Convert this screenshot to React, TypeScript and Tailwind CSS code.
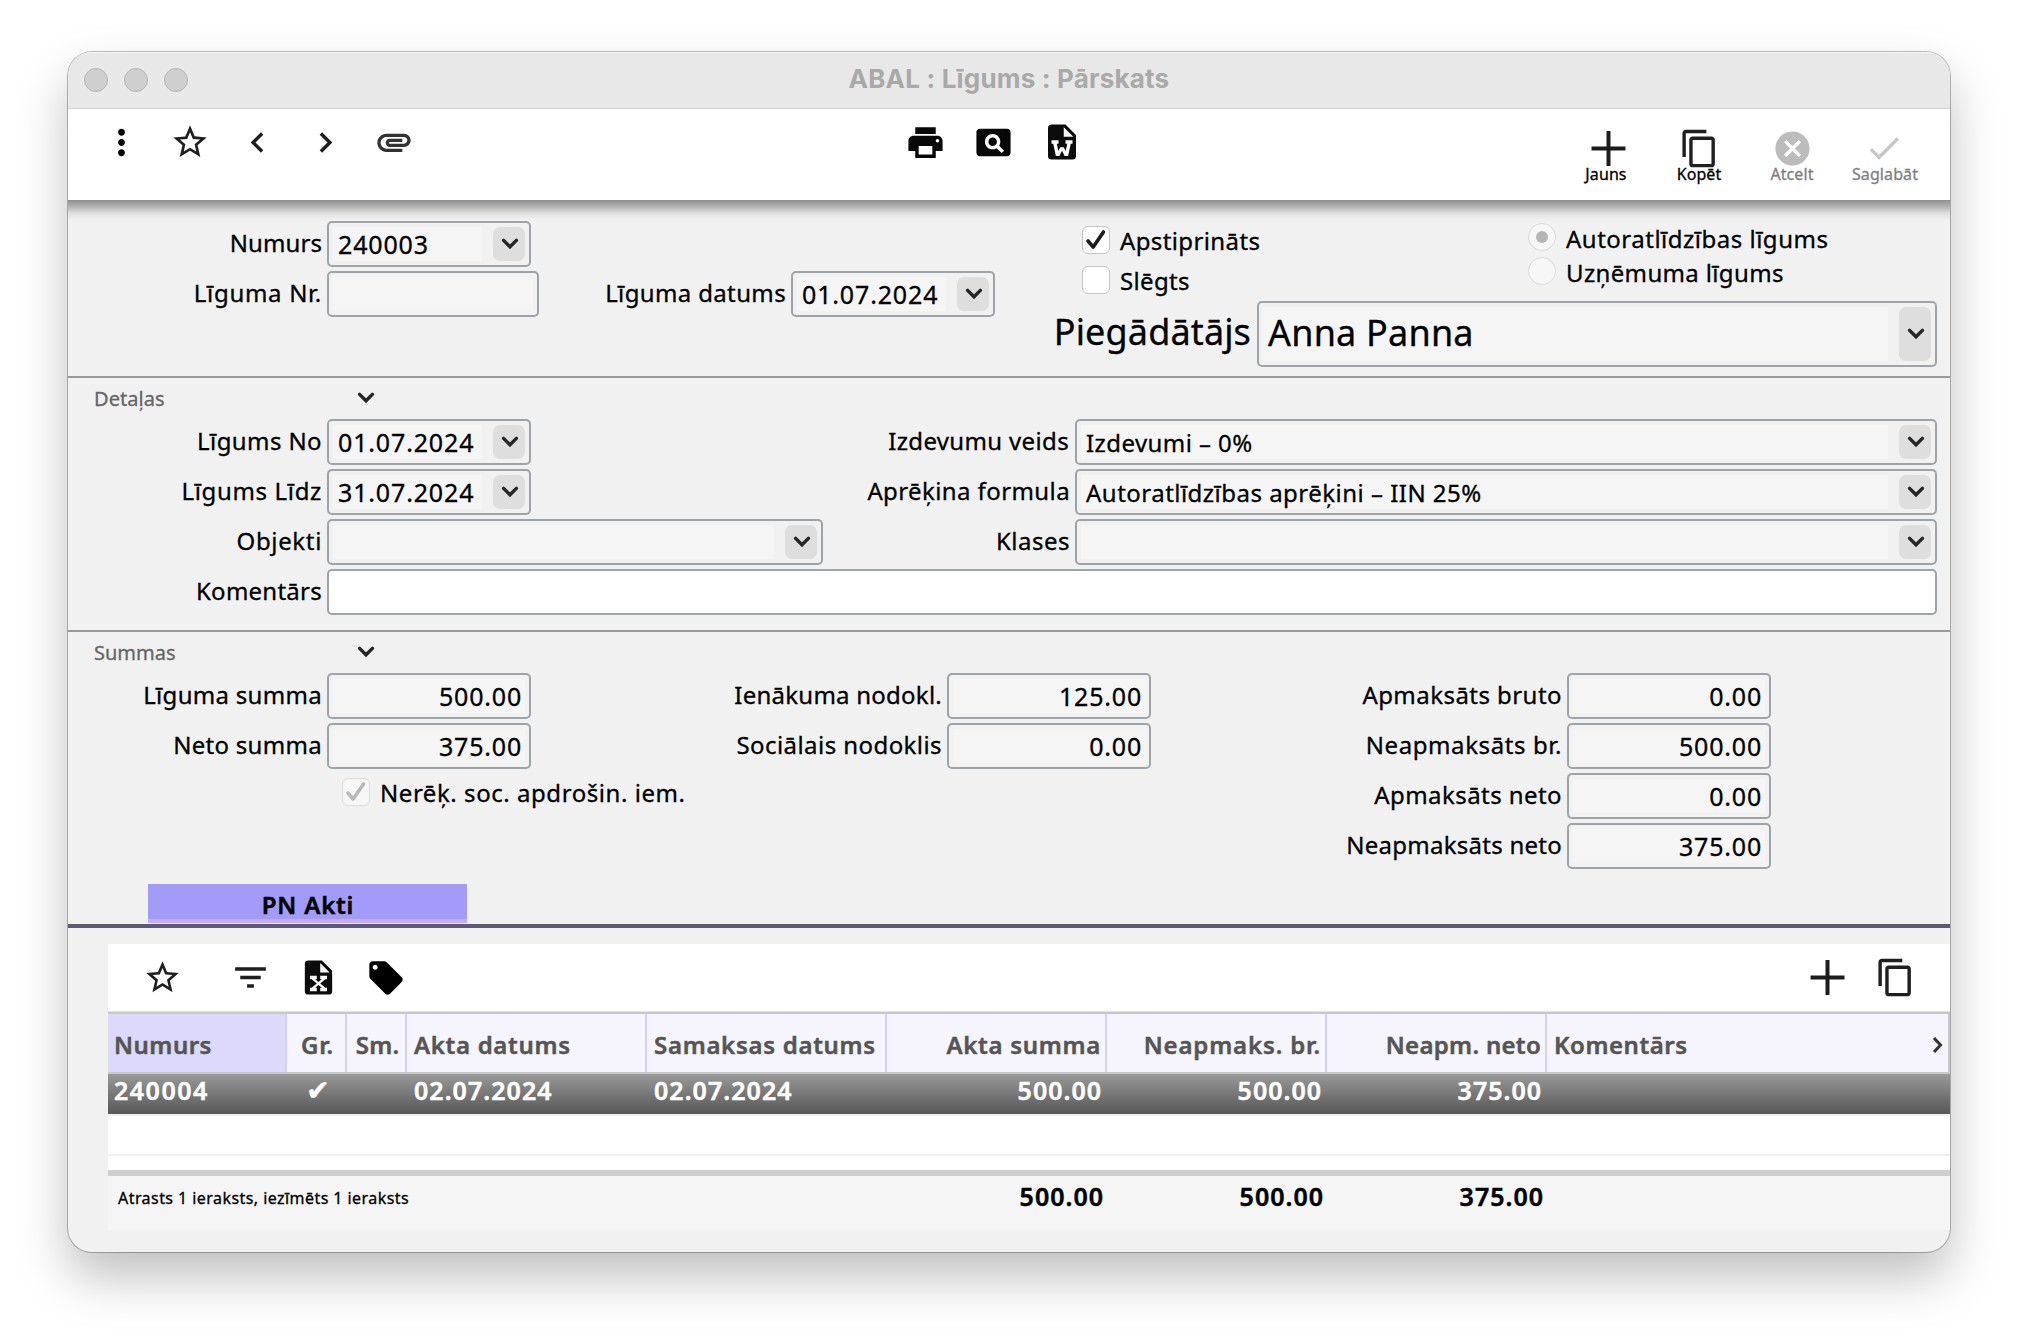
import type { ReactNode } from "react";
import {
  MdAttachment,
  MdCancel,
  MdCheck,
  MdChevronLeft,
  MdChevronRight,
  MdContentCopy,
  MdFilterList,
  MdLocalOffer,
  MdMoreVert,
  MdPageview,
  MdPrint,
  MdStarBorder,
} from "react-icons/md";

function Chevron() {
  return (
    <svg width="18" height="12" viewBox="0 0 18 12" fill="none" className="block shrink-0">
      <path d="M2.6 2.4 9 8.8l6.4-6.4" stroke="#262626" strokeWidth="3.4" strokeLinecap="round" />
    </svg>
  );
}

function Plus() {
  return (
    <svg width="41" height="41" viewBox="0 0 41 41" className="block">
      <path d="M20.5 3v35M3.5 20.5h34" stroke="#1c1c1c" strokeWidth="4" />
    </svg>
  );
}

function FileWord() {
  return (
    <svg width="42" height="42" viewBox="0 0 24 24" fill="#0c0c0c" className="block">
      <path d="M6,2H14L20,8V20A2,2 0 0,1 18,22H6A2,2 0 0,1 4,20V4A2,2 0 0,1 6,2M13,3.5V9H18.5L13,3.5M7,13L8.5,20H10.5L12,17L13.5,20H15.5L17,13H18V11H14V13H15L14.1,17.2L13,15V15H11V15L9.9,17.2L9,13H10V11H6V13H7Z" />
    </svg>
  );
}

function FileExcel() {
  return (
    <svg width="41" height="41" viewBox="0 0 24 24" fill="#0c0c0c" className="block">
      <path d="M6,2H14L20,8V20A2,2 0 0,1 18,22H6A2,2 0 0,1 4,20V4A2,2 0 0,1 6,2M13,3.5V9H18.5L13,3.5M17,11H13V13H14L12,14.67L10,13H11V11H7V13H8L11,15.5L8,18H7V20H11V18H10L12,16.33L14,18H13V20H17V18H16L13,15.5L16,13H17V11Z" />
    </svg>
  );
}

function Label({ w, children, className = "tracking-[0.36px]" }: { w: string; children: ReactNode; className?: string }) {
  return <div className={`${w} shrink-0 pb-[3px] text-right text-[24px] whitespace-nowrap ${className}`}>{children}</div>;
}

function Select({
  w,
  h = "h-[46px]",
  text = "pt-px text-[25px] tracking-[0.85px]",
  children,
}: {
  w: string;
  h?: string;
  text?: string;
  children?: ReactNode;
}) {
  return (
    <div className={`${w} ${h} flex shrink-0 rounded-[5px] border-2 border-[#9ca4a9] bg-[#f1f1f1] py-1 pr-1 pl-1`}>
      <div className={`mr-[11px] flex flex-1 items-center bg-[#f5f5f5] pl-[5px] whitespace-nowrap ${text}`}>{children}</div>
      <div className="flex w-[32px] items-center justify-center rounded-[7px] bg-[#dedede] pl-[2px]">
        <Chevron />
      </div>
    </div>
  );
}

function Field({ w, children, bg = "bg-[#f5f5f5]", outer = "bg-[#f2f2f2]" }: { w: string; children?: ReactNode; bg?: string; outer?: string }) {
  return (
    <div className={`${w} h-[46px] shrink-0 rounded-[5px] border-2 border-[#9ca4a9] p-1 ${outer}`}>
      <div className={`flex h-full items-center justify-end pt-px pr-[3px] text-[25px] tracking-[0.8px] ${bg}`}>{children}</div>
    </div>
  );
}

function CheckBox({ checked, disabled }: { checked?: boolean; disabled?: boolean }) {
  return (
    <div
      className={`flex size-[28px] shrink-0 items-center justify-center rounded-[6px] border ${
        disabled ? "border-[#dcdcdc] bg-[#f7f7f7]" : "border-[#c4c4c4] bg-white"
      }`}
    >
      {checked && (
        <svg width="22" height="22" viewBox="0 0 22 22" fill="none">
          <path
            d="M3 12 8.2 18 18.5 3"
            stroke={disabled ? "#b9b9b9" : "#1c1c1c"}
            strokeWidth="3.6"
            strokeLinecap="round"
            strokeLinejoin="round"
          />
        </svg>
      )}
    </div>
  );
}

function Radio({ on }: { on?: boolean }) {
  return (
    <div className="flex size-[28px] shrink-0 items-center justify-center rounded-full border border-[#dadada] bg-[#f7f7f7]">
      {on && <div className="size-3 rounded-full bg-[#b5b5b5]" />}
    </div>
  );
}

function SectionHead({ children, className }: { children: ReactNode; className: string }) {
  return (
    <div className="flex h-[41px] items-center">
      <div className={`w-[289px] shrink-0 pl-[26px] text-[20px] text-[#666] ${className}`}>{children}</div>
      <div className="pb-[2px]">
        <Chevron />
      </div>
    </div>
  );
}

function Slot({ children }: { children: ReactNode }) {
  return <div className="flex h-[42px] w-[68px] items-center justify-center pr-px">{children}</div>;
}

function Action({ icon, children, muted }: { icon: ReactNode; children: ReactNode; muted?: boolean }) {
  return (
    <div className="flex w-[93px] flex-col items-center">
      {icon}
      <div className={`-mt-[5px] pr-px text-[16px] leading-[20px] tracking-[0.1px] ${muted ? "text-[#808080]" : "text-black"}`}>{children}</div>
    </div>
  );
}

const columns = [
  { title: "Numurs", w: "w-[179px]", head: "pl-[6px] bg-[#dcd9fb] tracking-[0.5px]", cell: "pl-[6px] tracking-[1.5px]", value: "240004" },
  { title: "Gr.", w: "w-[60px]", head: "justify-center pl-[3px] tracking-[0.8px]", cell: "justify-center pl-[2px]", value: "✔" },
  { title: "Sm.", w: "w-[60px]", head: "justify-center pl-[3px] tracking-[0.2px]", cell: "", value: "" },
  { title: "Akta datums", w: "w-[240px]", head: "pl-[7px] tracking-[0.68px]", cell: "pl-[7px] tracking-[1.04px]", value: "02.07.2024" },
  { title: "Samaksas datums", w: "w-[240px]", head: "pl-[7px] tracking-[0.7px]", cell: "pl-[7px] tracking-[1.04px]", value: "02.07.2024" },
  { title: "Akta summa", w: "w-[220px]", head: "justify-end pr-[4px] tracking-[0.7px]", cell: "justify-end pr-[5px] tracking-[1px]", value: "500.00", total: "500.00" },
  { title: "Neapmaks. br.", w: "w-[220px]", head: "justify-end pr-[4px] tracking-[0.85px]", cell: "justify-end pr-[5px] tracking-[1px]", value: "500.00", total: "500.00" },
  { title: "Neapm. neto", w: "w-[220px]", head: "justify-end pr-[4px] tracking-[0.3px]", cell: "justify-end pr-[5px] tracking-[1px]", value: "375.00", total: "375.00" },
];

export default function App() {
  return (
    <div className="h-[1336px] w-[2018px] overflow-hidden bg-white pt-[52px] pl-[68px] font-['Noto_Sans',sans-serif] text-black [-webkit-text-stroke:0.3px]">
      <div className="flex h-[1200px] w-[1882px] flex-col overflow-hidden rounded-[24px] bg-[#f1f1f1] shadow-[0_0_0_1px_rgba(0,0,0,0.26),0_25px_50px_rgba(0,0,0,0.25)]">
        {/* Title bar */}
        <div className="flex h-[57px] shrink-0 items-center border-b border-[#d2d2d2] bg-[#e8e8e8] pl-4 shadow-[inset_0_1px_0_#f6f6f6]">
          <div className="flex w-[200px] gap-4">
            {[0, 1, 2].map((i) => (
              <div key={i} className="size-6 rounded-full border border-[#b4b4b4] bg-[#cfcfcf]" />
            ))}
          </div>
          <div className="mr-[216px] flex-1 pb-[3px] text-center font-['Inter',sans-serif] text-[26px] font-bold tracking-[0.19px] text-[#a9a9a9] [-webkit-text-stroke:0px]">
            ABAL : Līgums : Pārskats
          </div>
        </div>

        {/* Toolbar */}
        <div className="flex h-[91px] shrink-0 items-start bg-white pt-[12px] pr-[18px] pl-[20px] text-[#1f1f1f]">
          <Slot><MdMoreVert size={41} color="#000" /></Slot>
          <Slot><MdStarBorder size={40} /></Slot>
          <Slot><MdChevronLeft size={41} /></Slot>
          <Slot><MdChevronRight size={41} /></Slot>
          <Slot><MdAttachment size={40} color="#333" /></Slot>
          <div className="w-[464px]" />
          <Slot><MdPrint size={41} color="#080808" /></Slot>
          <Slot><MdPageview size={41} color="#080808" /></Slot>
          <Slot><FileWord /></Slot>
          <div className="ml-auto flex pt-[7px]">
            <Action icon={<div className="pl-[3px]"><Plus /></div>}>Jauns</Action>
            <Action icon={<MdContentCopy size={41} />}>Kopēt</Action>
            <Action icon={<MdCancel size={41} color="#bcbcbc" />} muted>Atcelt</Action>
            <Action icon={<MdCheck size={40} color="#c6c6c6" className="mr-[3px] mb-px" />} muted>Saglabāt</Action>
          </div>
        </div>

        {/* Contract header */}
        <div className="flex h-[178px] shrink-0 border-b-2 border-[#999] bg-[linear-gradient(to_bottom,#8f8f8f_0px,#b4b4b4_7px,#dedede_13px,#f1f1f1_20px)] pt-[21px]">
          <div className="flex w-[927px] shrink-0 flex-col gap-1">
            <div className="flex items-center gap-[5px]">
              <Label w="w-[254px]" className="tracking-[0.1px]">Numurs</Label>
              <Select w="w-[204px]">240003</Select>
            </div>
            <div className="flex items-center gap-[5px]">
              <Label w="w-[254px]" className="tracking-[0.7px]">Līguma Nr.</Label>
              <Field w="w-[212px]" />
              <Label w="w-[242px]">Līguma datums</Label>
              <Select w="w-[204px]">01.07.2024</Select>
            </div>
          </div>
          <div className="flex flex-1 flex-col pr-[13px]">
            <div className="flex h-[80px] pl-[87px] text-[24px]">
              <div className="flex w-[446px] flex-col gap-3 pt-[5px]">
                <div className="flex h-7 items-center gap-[10px] tracking-[0.38px]"><CheckBox checked /><span className="pt-px">Apstiprināts</span></div>
                <div className="flex h-7 items-center gap-[10px] tracking-[0.33px]"><CheckBox /><span className="pt-px">Slēgts</span></div>
              </div>
              <div className="flex flex-col gap-[6px] pt-[2px]">
                <div className="flex h-7 items-center gap-[10px] tracking-[0.5px]"><Radio on /><span className="pt-1">Autoratlīdzības līgums</span></div>
                <div className="flex h-7 items-center gap-[10px] tracking-[0.35px]"><Radio /><span className="pt-1">Uzņēmuma līgums</span></div>
              </div>
            </div>
            <div className="flex items-center justify-end gap-[6px]">
              <div className="pb-[5px] text-[36px] leading-[50px] tracking-[0.13px]">Piegādātājs</div>
              <Select w="w-[680px]" h="h-[66px]" text="pb-[3px] text-[36px] tracking-[0.2px]">Anna Panna</Select>
            </div>
          </div>
        </div>

        {/* Details */}
        <div className="h-[254px] shrink-0 border-b-2 border-[#999] pr-[13px]">
          <SectionHead className="tracking-[0.05px]">Detaļas</SectionHead>
          <div className="flex flex-col gap-1">
            <div className="flex items-center gap-[5px]">
              <Label w="w-[254px]" className="tracking-[0.4px]">Līgums No</Label>
              <Select w="w-[204px]">01.07.2024</Select>
              <Label w="w-[533px]" className="mr-px tracking-[0.35px]">Izdevumu veids</Label>
              <Select w="w-[862px]" text="pt-px text-[24px] tracking-[0.43px]">Izdevumi – 0%</Select>
            </div>
            <div className="flex items-center gap-[5px]">
              <Label w="w-[254px]" className="tracking-[0.65px]">Līgums Līdz</Label>
              <Select w="w-[204px]">31.07.2024</Select>
              <Label w="w-[534px]" className="tracking-[0.4px]">Aprēķina formula</Label>
              <Select w="w-[862px]" text="pt-px text-[24px] tracking-[0.48px]">Autoratlīdzības aprēķini – IIN 25%</Select>
            </div>
            <div className="flex items-center gap-[5px]">
              <Label w="w-[254px]" className="tracking-[0.65px]">Objekti</Label>
              <Select w="w-[496px]" />
              <Label w="w-[242px]" className="tracking-[0.5px]">Klases</Label>
              <Select w="w-[862px]" />
            </div>
            <div className="flex items-center gap-[5px]">
              <Label w="w-[254px]" className="tracking-[0.25px]">Komentārs</Label>
              <Field w="w-[1610px]" bg="bg-white" outer="bg-white" />
            </div>
          </div>
        </div>

        {/* Sums */}
        <div className="h-[252px] shrink-0">
          <SectionHead className="tracking-[0px]">Summas</SectionHead>
          <div className="flex">
            <div className="flex w-[463px] flex-col gap-1">
              <div className="flex items-center gap-[5px]">
                <Label w="w-[254px]" className="tracking-[0.3px]">Līguma summa</Label>
                <Field w="w-[204px]">500.00</Field>
              </div>
              <div className="flex items-center gap-[5px]">
                <Label w="w-[254px]" className="tracking-[0.3px]">Neto summa</Label>
                <Field w="w-[204px]">375.00</Field>
              </div>
              <div className="flex h-[38px] items-center gap-[10px] pl-[274px] text-[24px] tracking-[0.55px] whitespace-nowrap">
                <CheckBox checked disabled />
                <span className="pt-[2px]">Nerēķ. soc. apdrošin. iem.</span>
              </div>
            </div>
            <div className="flex w-[620px] flex-col gap-1">
              <div className="flex items-center gap-[5px]">
                <Label w="w-[411px]" className="tracking-[0.24px]">Ienākuma nodokl.</Label>
                <Field w="w-[204px]">125.00</Field>
              </div>
              <div className="flex items-center gap-[5px]">
                <Label w="w-[411px]" className="tracking-[0.43px]">Sociālais nodoklis</Label>
                <Field w="w-[204px]">0.00</Field>
              </div>
            </div>
            <div className="flex flex-col gap-1">
              <div className="flex items-center gap-[5px]">
                <Label w="w-[411px]" className="tracking-[0.45px]">Apmaksāts bruto</Label>
                <Field w="w-[204px]">0.00</Field>
              </div>
              <div className="flex items-center gap-[5px]">
                <Label w="w-[411px]" className="tracking-[0.6px]">Neapmaksāts br.</Label>
                <Field w="w-[204px]">500.00</Field>
              </div>
              <div className="flex items-center gap-[5px]">
                <Label w="w-[411px]" className="tracking-[0.43px]">Apmaksāts neto</Label>
                <Field w="w-[204px]">0.00</Field>
              </div>
              <div className="flex items-center gap-[5px]">
                <Label w="w-[411px]" className="tracking-[0.26px]">Neapmaksāts neto</Label>
                <Field w="w-[204px]">375.00</Field>
              </div>
            </div>
          </div>
        </div>

        {/* Tab strip */}
        <div className="h-[44px] shrink-0 border-b-4 border-[#5c5a75] pl-[80px]">
          <div className="flex h-[39px] w-[319px] items-center justify-center border-b-4 border-[#c6abf8] bg-[#a39bf7] pt-[7px] pl-px text-[24px] font-semibold tracking-[0.8px] [-webkit-text-stroke:0.5px]">
            PN Akti
          </div>
        </div>

        {/* Acts table */}
        <div className="mt-4 ml-[40px]">
          <div className="flex h-[68px] items-center border-b border-[#e2e2e2] bg-white pr-[34px] text-[#1f1f1f]">
            <div className="flex w-[108px] justify-center"><MdStarBorder size={39} /></div>
            <div className="ml-[13px] flex w-[42px] justify-center"><MdFilterList size={41} /></div>
            <div className="ml-[26px] flex w-[42px] justify-center"><FileExcel /></div>
            <div className="ml-[26px] flex w-[42px] justify-center"><MdLocalOffer size={40} color="#000" /></div>
            <div className="ml-auto"><Plus /></div>
            <div className="ml-[27px]"><MdContentCopy size={41} /></div>
          </div>
          <div className="flex h-[62px] border-y-2 border-r-2 border-[#c8c8c8] bg-[#f6f5fd] text-[24px] font-semibold text-[#555] [-webkit-text-stroke:0.5px]">
            {columns.map((c) => (
              <div key={c.title} className={`${c.w} ${c.head} flex shrink-0 items-center border-r-2 border-[#d3cff8] pt-[3px] whitespace-nowrap`}>
                {c.title}
              </div>
            ))}
            <div className="flex flex-1 items-center justify-between pt-[3px] pr-[5px] pl-[7px] tracking-[0.55px]">
              Komentārs
              <svg width="11" height="18" viewBox="0 0 11 18" fill="none">
                <path d="M2 2l6.5 7L2 16" stroke="#333" strokeWidth="3" />
              </svg>
            </div>
          </div>
          <div className="flex h-[40px] bg-linear-to-b from-[#999] to-[#585858] text-[25px] font-semibold text-white [-webkit-text-stroke:0.5px]">
            {columns.map((c) => (
              <div key={c.title} className={`${c.w} ${c.cell} flex shrink-0 items-center pb-[6px]`}>
                {c.value === "✔" ? <span className="font-['DejaVu_Sans',sans-serif] text-[28px] font-normal">{c.value}</span> : c.value}
              </div>
            ))}
          </div>
          <div className="h-[42px] border-y-2 border-[#f0f0f0] bg-white" />
          <div className="h-[14px] bg-white" />
          <div className="flex h-[60px] items-center border-t-[6px] border-[#cfcfcf] bg-[#f5f5f5]">
            <div className="w-[780px] pb-[11px] pl-[10px] text-[16px] tracking-[0.44px]">Atrasts 1 ieraksts, iezīmēts 1 ieraksts</div>
            {columns.filter((c) => c.total).map((c) => (
              <div key={c.title} className="w-[220px] pr-1 pb-[12px] text-right text-[25px] font-semibold tracking-[1px] [-webkit-text-stroke:0.5px]">
                {c.total}
              </div>
            ))}
          </div>
        </div>
      </div>
    </div>
  );
}
